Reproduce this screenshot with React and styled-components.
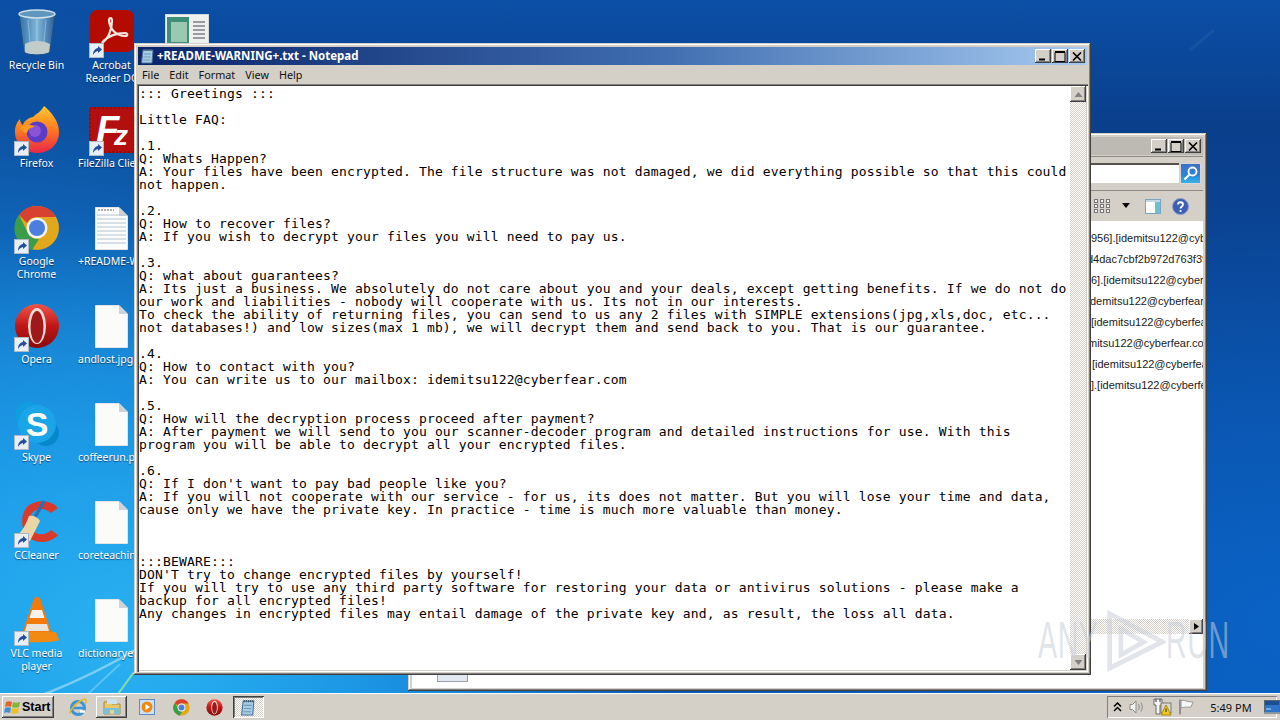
import React from "react";
import styled, { createGlobalStyle, css } from "styled-components";

const Global = createGlobalStyle`
  html, body { margin: 0; padding: 0; width: 1280px; height: 720px; overflow: hidden; background: #0a4ea6; }
  #root { width: 1280px; height: 720px; }
  * { box-sizing: border-box; }
`;

const raised = css`
  background: #d4d0c8;
  box-shadow: inset -1px -1px #404040, inset 1px 1px #fff, inset -2px -2px #808080, inset 2px 2px #d4d0c8;
`;
const dither = css`
  background: repeating-conic-gradient(#d4d0c8 0 25%, #fff 0 50%) 0 0 / 2px 2px;
`;
const uiFont = `"Noto Sans", "Liberation Sans", sans-serif`;

const Screen = styled.div`
  width: 1280px; height: 720px; display: flex; flex-direction: column; overflow: hidden;
  font-family: ${uiFont};
`;
const Desktop = styled.div`
  position: relative; flex: 1; overflow: hidden;
  background:
    radial-gradient(520px 420px at 130px 640px, #2ab2f2 0%, rgba(30,160,235,.75) 50%, rgba(20,130,215,0) 100%),
    radial-gradient(700px 560px at 0px 560px, #1a94e0 0%, rgba(18,120,205,.6) 60%, rgba(15,90,180,0) 100%),
    radial-gradient(500px 400px at 1280px 620px, #0a62c4 0%, rgba(8,80,170,0) 100%),
    linear-gradient(180deg, #0b4fa6 0%, #0a3f8c 18%, #0a4a9e 55%, #0a58b6 100%);
`;
const Streaks = styled.svg`
  position: absolute; inset: 0; width: 1280px; height: 694px;
`;

const IconGrid = styled.div`
  position: relative; display: grid; grid-auto-flow: column;
  grid-template-rows: repeat(7, 98px); grid-template-columns: repeat(3, 75px);
  margin-left: -1px; width: 225px;
`;
const Cell = styled.div`
  display: flex; flex-direction: column; align-items: center; padding-top: 8px; min-width: 0;
`;
const IconBox = styled.div`
  position: relative; width: 48px; height: 48px; display: flex; align-items: center; justify-content: center;
`;
const Badge = styled.svg`
  position: absolute; left: 1px; bottom: -2px; width: 15px; height: 15px;
`;
const Label = styled.div`
  margin-top: 3px; width: 75px; font-size: 10.5px; line-height: 13px; color: #fff;
  text-align: ${p => (p.$start ? "left" : "center")};
  padding-left: ${p => (p.$start ? "4px" : "0")};
  white-space: pre;
  text-shadow: 0 1px 1px rgba(0,0,40,.55);
`;

const Win = styled.div`
  position: absolute; display: flex; flex-direction: column;
  left: ${p => p.$x}px; top: ${p => p.$y}px; width: ${p => p.$w}px; height: ${p => p.$h}px;
  padding: 4px 4px 3px;
  background: #d4d0c8;
  box-shadow: inset -1px -1px #404040, inset 1px 1px #d4d0c8, inset -2px -2px #808080, inset 2px 2px #fff;
`;
const TitleBar = styled.div`
  height: 18px; flex: none; display: flex; align-items: center; padding: 0 2px 0 2px; gap: 0;
  background: ${p => (p.$active ? "linear-gradient(90deg, #0a246a 0%, #3f6db0 55%, #a6caf0 100%)" : "#bdbab3")};
`;
const TitleText = styled.div`
  flex: 1; color: #fff; font-size: 11.5px; font-weight: 700; white-space: nowrap; line-height: 18px; padding-left: 1px;
`;
const CapButton = styled.div`
  ${raised};
  width: 16px; height: 14px; display: flex; align-items: center; justify-content: center; flex: none;
`;
const CapGroup = styled.div`display: flex; gap: 1px; margin-left: auto;`;

const MenuBar = styled.div`
  height: 19px; flex: none; display: flex; align-items: center; gap: 10px; padding: 0 0 0 4px;
  font-size: 10.8px; color: #111;
`;
const EditFrame = styled.div`
  flex: 1; min-height: 0; display: flex; background: #fff; padding: 2px;
  margin: 0 -1px 0 -1px;
  box-shadow: inset 1px 1px #808080, inset 2px 2px #404040, inset -1px -1px #fff, inset -2px -2px #d4d0c8;
`;
const TextArea = styled.pre`
  flex: 1; margin: 0; padding: 1px 0 0 0; overflow: hidden; color: #000;
  font-family: "DejaVu Sans Mono", "Liberation Mono", monospace;
  font-size: 13px; line-height: 13px; letter-spacing: 0.17px; white-space: pre;
`;
const VScroll = styled.div`
  ${dither};
  width: 16px; flex: none; display: flex; flex-direction: column; justify-content: space-between;
`;
const ScrollBtn = styled.div`
  ${raised};
  width: ${p => p.$w || 16}px; height: ${p => p.$h || 16}px; flex: none;
  display: flex; align-items: center; justify-content: center;
`;

const AddressRow = styled.div`
  height: 35px; flex: none; display: flex; align-items: center; justify-content: flex-end;
  gap: 1px; padding-right: 2px;
  border-top: 1px solid #8a8a86; border-bottom: 1px solid #8a8a86; margin-top: 1px;
`;
const SearchBox = styled.div`
  width: 560px; height: 21px; background: #fff; border-top: 2px solid #55534e; border-bottom: 1px solid #d4d0c8;
`;
const SearchBtn = styled.div`
  width: 21px; height: 21px; background: linear-gradient(180deg, #3f6fc6 0%, #2a87d8 60%, #39b2e8 100%);
  border: 1px solid #d8d8d8; display: flex; align-items: center; justify-content: center;
`;
const ToolBar = styled.div`
  height: 30px; flex: none; display: flex; align-items: center; justify-content: flex-end;
  padding-right: 14px;
`;
const ToolSlot = styled.div`
  display: flex; align-items: center; flex: none; margin-right: ${p => p.$gap}px;
`;
const ListPane = styled.div`
  flex: 1; min-height: 0; background: #fff; overflow: hidden; display: flex; flex-direction: column; position: relative;
`;
const FileList = styled.div`flex: none; padding-top: 7px;`;
const FileRow = styled.div`
  height: 21px; line-height: 21px; font-family: "Liberation Sans", sans-serif; font-size: 11px;
  color: #1a1a1a; white-space: nowrap; overflow: hidden;
  padding-left: ${p => p.$x}px;
`;
const HScroll = styled.div`
  ${dither};
  position: absolute; left: 0; right: 0; top: 398px; height: 15px; display: flex; justify-content: flex-end;
`;
const Thumb = styled.div`
  position: absolute; left: 25px; top: 452px; width: 31px; height: 9px;
  background: #e2e8f0; border: 1px solid #9aa0a8; border-top: 0;
`;

const Watermark = styled.div`
  position: absolute; left: 1038px; top: 608px; width: 200px; height: 64px; display: flex; align-items: center;
  pointer-events: none; color: rgba(200,205,215,.55);
`;
const WmText = styled.span`
  font-family: "Liberation Sans", sans-serif; font-size: 52px; line-height: 64px; display: inline-block;
  transform-origin: left center; transform: scaleX(.55); width: ${p => p.$w}px;
  letter-spacing: 1px; white-space: nowrap;
`;

const Taskbar = styled.div`
  height: 27px; flex: none; display: flex; align-items: center; padding: 1px 3px 0 2px;
  background: #d4d0c8; box-shadow: inset 0 1px #fff; position: relative; z-index: 2;
`;
const StartBtn = styled.div`
  ${raised};
  width: 52px; height: 22px; display: flex; align-items: center; gap: 0; padding-left: 2px;
  font-family: "Liberation Sans", sans-serif; font-weight: 700; font-size: 12.5px; color: #000; margin-right: 14px;
`;
const Quick = styled.div`
  display: flex; align-items: center; justify-content: center; height: 22px; flex: none;
  width: ${p => p.$w}px; margin-right: ${p => p.$gap}px;
  ${p => p.$raised && raised}
  ${p => p.$pressed && css`
    ${dither};
    box-shadow: inset 1px 1px #404040, inset -1px -1px #fff, inset 2px 2px #808080;
  `}
`;
const Tray = styled.div`
  margin-left: auto; width: 170px; height: 22px; display: flex; align-items: center; padding-left: 3px;
  box-shadow: inset 1px 1px #808080, inset -1px -1px #fff;
`;
const TraySlot = styled.div`
  width: ${p => p.$w}px; flex: none; display: flex; align-items: center; justify-content: center;
`;
const Clock = styled.div`
  font-size: 11px; color: #111; flex: none; width: 58px; text-align: center; margin-left: 4px; margin-right: 2px;
`;

/* ---------- drawings ---------- */
const Shortcut = () => (
  <Badge viewBox="0 0 15 15">
    <rect x=".5" y=".5" width="14" height="14" fill="#e8eef6" stroke="#aeb8c6" />
    <path d="M4 12c0-4 2-6.5 5-7V3l4 3.6-4 3.4V8C7 8.3 5.500 9.500 4 12z" fill="#1f4f9e" />
  </Badge>
);

const Bin = () => (
  <svg width="40" height="48" viewBox="0 0 40 48">
    <defs><linearGradient id="b1" x1="0" x2="1"><stop offset="0" stopColor="#2f6fa8" /><stop offset=".5" stopColor="#7fb6d8" /><stop offset="1" stopColor="#2a5f98" /></linearGradient></defs>
    <path d="M2 6l5 38c2 3 24 3 26 0l5-38z" fill="url(#b1)" stroke="#234f7a" />
    <path d="M8 36c6-4 18-4 25 0l-1 8c-3 3-22 3-24 0z" fill="#c2ccca" />
    <ellipse cx="20" cy="6" rx="18" ry="4" fill="#5f97bf" stroke="#cfdee8" strokeWidth="1.500" />
    <path d="M11 12l2 22M20 12v22M29 12l-2 22" stroke="#d6ecf8" strokeOpacity=".4" />
  </svg>
);
const Acrobat = () => (
  <svg width="44" height="44" viewBox="0 0 44 44">
    <rect x="0" y="0" width="44" height="42" rx="7" fill="#b30b00" />
    <path d="M12 33c6-4 10-13 10-22 0-4-3-4-3 0 1 8 7 15 16 15 3 0 3-3 0-3-8 0-18 3-23 10z" fill="none" stroke="#f6e6e2" strokeWidth="2.200" />
  </svg>
);
const Thumbnail = () => (
  <svg width="44" height="36" viewBox="0 0 44 36">
    <rect width="44" height="36" fill="#eef0ee" stroke="#b8c4cc" />
    <rect x="2" y="3" width="22" height="28" fill="#3f8f78" />
    <rect x="6" y="8" width="16" height="20" fill="#9cc7b0" />
    <path d="M28 8h12M28 12h12M28 16h12M28 20h12M28 24h12" stroke="#9a9aa4" strokeWidth="2" />
  </svg>
);
const Firefox = () => (
  <svg width="46" height="48" viewBox="0 0 46 48">
    <defs>
      <linearGradient id="f1" x1="0" y1="0" x2="0" y2="1"><stop offset="0" stopColor="#ffcb2e" /><stop offset=".5" stopColor="#ff7a1f" /><stop offset="1" stopColor="#e8264a" /></linearGradient>
    </defs>
    <path d="M30 0c6 5 15 14 15 26 0 13-10 21-22 21S1 38 1 26c0-6 2-10 5-13 0 3 1 5 3 6 1-4 5-7 10-8 3-3 8-5 11-11z" fill="url(#f1)" />
    <circle cx="23" cy="26" r="10.500" fill="#5b3cc4" />
    <circle cx="21" cy="25" r="6" fill="#8a53d8" />
    <path d="M6 22c5-4 11-4 15-1-4 0-7 2-8 6-3 0-5-2-7-5z" fill="#ff9a1f" />
  </svg>
);
const FileZilla = () => (
  <svg width="46" height="46" viewBox="0 0 46 46">
    <rect width="46" height="46" fill="#b30f0f" />
    <rect x="1" y="1" width="44" height="44" fill="none" stroke="#7a0a0a" strokeDasharray="2 2" />
    <text x="7" y="36" fontFamily="Liberation Sans, sans-serif" fontWeight="700" fontStyle="italic" fontSize="38" fill="#fff">F</text>
    <text x="25" y="38" fontFamily="Liberation Sans, sans-serif" fontWeight="700" fontStyle="italic" fontSize="28" fill="#fff">z</text>
  </svg>
);
const Chrome = ({ s = 46 }) => (
  <svg width={s} height={s} viewBox="0 0 46 46">
    <circle cx="23" cy="23" r="22" fill="#e0a81a" />
    <path d="M23 1a22 22 0 0 1 19 11H23a11 11 0 0 0-10 6L5 10A22 22 0 0 1 23 1z" fill="#d8402f" />
    <path d="M5 10l9 18a11 11 0 0 0 11 6l-7 11A22 22 0 0 1 5 10z" fill="#3c9d48" />
    <circle cx="23" cy="23" r="10.500" fill="#f2f4f8" />
    <circle cx="23" cy="23" r="8" fill="#4c7ede" />
  </svg>
);
const Opera = ({ s = 46 }) => (
  <svg width={s} height={s} viewBox="0 0 46 46">
    <defs><linearGradient id={`o${s}`} x1="0" y1="0" x2="0" y2="1"><stop offset="0" stopColor="#f0554a" /><stop offset=".5" stopColor="#c01616" /><stop offset="1" stopColor="#8c0a0a" /></linearGradient></defs>
    <ellipse cx="23" cy="23" rx="22" ry="22" fill={`url(#o${s})`} />
    <ellipse cx="23" cy="23" rx="9" ry="18" fill="#e8dcd8" />
    <ellipse cx="23" cy="24" rx="6.500" ry="16" fill="#a01818" />
  </svg>
);
const Skype = () => (
  <svg width="46" height="46" viewBox="0 0 46 46">
    <circle cx="14" cy="14" r="13" fill="#0f9ee0" />
    <circle cx="32" cy="32" r="13" fill="#0788cc" />
    <circle cx="23" cy="23" r="19" fill="#1aa5e8" />
    <text x="23" y="35" textAnchor="middle" fontFamily="Liberation Sans, sans-serif" fontWeight="700" fontSize="34" fill="#fff">S</text>
  </svg>
);
const CCleaner = () => (
  <svg width="46" height="46" viewBox="0 0 46 46">
    <path d="M44 9C38 1 24 0 15 6 6 13 6 30 14 38c8 7 22 7 30-2l-7-5c-6 6-14 5-18 1-5-5-5-14 0-19 5-4 12-4 18 1z" fill="#d93a2a" />
    <path d="M30 2L20 20" stroke="#2a6fb8" strokeWidth="3.500" />
    <path d="M15 17c4-1 9 1 11 5l-10 20c-5 1-11-2-13-6 5-3 9-11 12-19z" fill="#ecd6a8" />
  </svg>
);
const Vlc = () => (
  <svg width="46" height="48" viewBox="0 0 46 48">
    <path d="M23 1c2 0 3 1 3.500 3L38 38H8L19.500 4C20 2 21 1 23 1z" fill="#f47a0a" />
    <path d="M18 14h10l2.500 8h-15z" fill="#f4f2ee" />
    <path d="M13 28h20l2 7H11z" fill="#e8e4dc" />
    <path d="M4 36h38l3 8c-4 3-40 3-44 0z" fill="#f08a12" />
  </svg>
);
const Doc = ({ lines }) => (
  <svg width="33" height="43" viewBox="0 0 33 43">
    <path d="M.5.5H24L32.500 9V42.500H.5z" fill="#fbfbfa" stroke="#e4e4e4" />
    <path d="M24 .5V9h8.500z" fill="#cfd3d8" />
    {lines && [8, 12, 16, 20, 24, 28, 32, 36].map(y => <path key={y} d={`M2 ${y}H31`} stroke="#b6c2d6" />)}
    {lines && <path d="M3 3h16" stroke="#b0b0b0" strokeDasharray="2 1" strokeWidth="2" />}
  </svg>
);
const Pad = ({ s = 16 }) => (
  <svg width={s} height={s} viewBox="0 0 16 16">
    <path d="M3 2h10l-1 13H1.500z" fill="#a8cbe6" stroke="#47708f" />
    <path d="M4 1v2M6 1v2M8 1v2M10 1v2M12 1v2" stroke="#3d5a70" />
    <path d="M4 6h7M3.500 9h7M3.200 12h7" stroke="#6f99b8" />
  </svg>
);
const IE = () => (
  <svg width="20" height="20" viewBox="0 0 20 20">
    <circle cx="10" cy="11" r="6.500" fill="none" stroke="#3a94d8" strokeWidth="3" />
    <path d="M3.500 11H16.500" stroke="#3a94d8" strokeWidth="2.500" />
    <path d="M12 14.500h5" stroke="#fff" strokeWidth="2.500" />
    <path d="M2 17C1 14 9 4 17 2c2 1 1 4 0 5" fill="none" stroke="#e8b820" strokeWidth="1.500" />
  </svg>
);
const Folder = () => (
  <svg width="20" height="18" viewBox="0 0 20 18">
    <path d="M2 4h6l2 2h8v10H2z" fill="#e8c868" stroke="#a88a3a" />
    <path d="M5 1h10v5H5z" fill="#cfe2ea" />
    <path d="M2 10h16v6H2z" fill="#7cc0d8" />
    <path d="M8 16v-4h4v4" fill="#e9d28a" />
  </svg>
);
const Wmp = () => (
  <svg width="16" height="16" viewBox="0 0 16 16">
    <rect x=".5" y=".5" width="15" height="15" fill="#cfe0f4" stroke="#5f8cc8" />
    <circle cx="8" cy="8" r="5.500" fill="#ee8a14" />
    <path d="M6.500 5v6l4.500-3z" fill="#fff" />
  </svg>
);
const StartFlag = () => (
  <svg width="18" height="16" viewBox="0 0 18 16">
    <path d="M2 3c2-1 4-1 6 0l-1 5c-2-1-4-1-6 0z" fill="#e8612c" />
    <path d="M9 3c2 1 4 1 7 0l-1 5c-3 1-5 1-7 0z" fill="#7cb83a" />
    <path d="M1 9c2-1 4-1 6 0l-1 5c-2-1-4-1-6 0z" fill="#3f8fd8" />
    <path d="M8 9c2 1 4 1 7 0l-1 5c-3 1-5 1-7 0z" fill="#f0c020" />
  </svg>
);
const Min = () => <svg width="10" height="10" viewBox="0 0 10 10"><path d="M1 8.500h6" stroke="#000" strokeWidth="2" /></svg>;
const Max = () => <svg width="12" height="11" viewBox="0 0 12 11"><path d="M1 1.500h10v9H1zM1 .5h10" fill="none" stroke="#000" /></svg>;
const Close = () => <svg width="10" height="9" viewBox="0 0 10 9"><path d="M1 .5l8 8M9 .5l-8 8" stroke="#000" strokeWidth="1.600" /></svg>;
const Caps = () => (
  <CapGroup>
    <CapButton><Min /></CapButton>
    <CapButton><Max /></CapButton>
    <CapButton><Close /></CapButton>
  </CapGroup>
);
const Tri = ({ d, c = "#808080" }) => <svg width="9" height="7" viewBox="0 0 9 7"><path d={d} fill={c} /></svg>;

const ViewGrid = () => (
  <svg width="16" height="14" viewBox="0 0 16 14" fill="#f4f4f0" stroke="#77767a">
    {[0.5, 5.5, 10.5].map(y => [0.5, 6.5, 12.5].map(x => <rect key={`${x}${y}`} x={x} y={y} width="3" height="3" />))}
  </svg>
);
const Pane = () => (
  <svg width="16" height="15" viewBox="0 0 16 15">
    <rect x=".5" y=".5" width="15" height="14" fill="#fff" stroke="#7aa4c4" />
    <rect x="1" y="1" width="14" height="2" fill="#c4d8e8" />
    <rect x="10" y="3" width="5" height="11" fill="#6cc0d0" />
  </svg>
);
const Help = () => (
  <svg width="17" height="17" viewBox="0 0 17 17">
    <circle cx="8.500" cy="8.500" r="8" fill="#3c5fb4" stroke="#8a9ccc" />
    <path d="M6 6.500c0-3 5-3 5 0 0 2-2.500 2-2.500 4" fill="none" stroke="#fff" strokeWidth="1.800" />
    <circle cx="8.500" cy="13" r="1.100" fill="#fff" />
  </svg>
);
const Loupe = () => (
  <svg width="15" height="15" viewBox="0 0 15 15">
    <circle cx="9.500" cy="5.500" r="4" fill="none" stroke="#fff" strokeWidth="1.800" />
    <path d="M6.500 8.500L1.500 13.500" stroke="#fff" strokeWidth="2.200" />
  </svg>
);
const Speaker = () => (
  <svg width="18" height="16" viewBox="0 0 18 16" fill="none" stroke="#8a8a8a">
    <path d="M2 5.500h2.500L8 2v12l-3.500-3.500H2z" fill="#f2f2f0" />
    <path d="M10.500 5c1 2 1 4 0 6M13 3.500c1.700 3 1.700 6 0 9" />
  </svg>
);
const Network = () => (
  <svg width="20" height="18" viewBox="0 0 20 18">
    <path d="M2 1v6h2v9h4V7h2V1z" fill="#f4f4f0" stroke="#6a6a6a" />
    <path d="M4 1v3M8 1v3" stroke="#333" />
    <rect x="9" y="5" width="10" height="10" fill="#d8d8cc" stroke="#7a7a70" />
    <path d="M14 7l5 10H9z" fill="#f2c81e" stroke="#a88a10" />
    <path d="M14 10.500v3.500" stroke="#222" />
  </svg>
);
const FlagTray = () => (
  <svg width="18" height="18" viewBox="0 0 18 18" fill="none">
    <path d="M3 1.500v15" stroke="#7a7a7a" strokeWidth="1.500" />
    <path d="M4 2.500c3-1 5 1 7 1l5 .5-2 5c-3 .5-7-.5-10 1z" fill="#f6f6f4" stroke="#9a9a98" />
  </svg>
);
const Monitor = () => (
  <svg width="16" height="14" viewBox="0 0 16 14">
    <rect x=".5" y=".5" width="15" height="12" fill="#2f74c8" stroke="#5a6670" />
    <path d="M1 1h14v4H1z" fill="#1c4f96" />
    <path d="M2 9h5" stroke="#bfe0f8" />
    <rect x="0" y="12" width="16" height="2" fill="#8896a0" />
  </svg>
);
const Chevrons = () => (
  <svg width="9" height="10" viewBox="0 0 9 10" fill="none" stroke="#000" strokeWidth="1.500">
    <path d="M1 4.500l3.500-3.500 3.500 3.500M1 9l3.500-3.500L8 9" />
  </svg>
);

/* ---------- data ---------- */
const icons = [
  { name: "Recycle Bin", art: <Bin /> },
  { name: "Firefox", art: <Firefox />, link: 1 },
  { name: "Google\nChrome", art: <Chrome />, link: 1 },
  { name: "Opera", art: <Opera />, link: 1 },
  { name: "Skype", art: <Skype />, link: 1 },
  { name: "CCleaner", art: <CCleaner />, link: 1 },
  { name: "VLC media\nplayer", art: <Vlc />, link: 1 },
  { name: "Acrobat\nReader DC", art: <Acrobat />, link: 1 },
  { name: "FileZilla Client", art: <FileZilla />, link: 1, start: 1 },
  { name: "+README-WARNING+.txt", art: <Doc lines />, start: 1 },
  { name: "andlost.jpg", art: <Doc />, start: 1 },
  { name: "coffeerun.png", art: <Doc />, start: 1 },
  { name: "coreteaching.rtf", art: <Doc />, start: 1 },
  { name: "dictionaryen.rtf", art: <Doc />, start: 1 },
  { name: "", art: <Thumbnail /> },
];

const note = `::: Greetings :::

Little FAQ:

.1.
Q: Whats Happen?
A: Your files have been encrypted. The file structure was not damaged, we did everything possible so that this could
not happen.

.2.
Q: How to recover files?
A: If you wish to decrypt your files you will need to pay us.

.3.
Q: what about guarantees?
A: Its just a business. We absolutely do not care about you and your deals, except getting benefits. If we do not do
our work and liabilities - nobody will cooperate with us. Its not in our interests.
To check the ability of returning files, you can send to us any 2 files with SIMPLE extensions(jpg,xls,doc, etc...
not databases!) and low sizes(max 1 mb), we will decrypt them and send back to you. That is our guarantee.

.4.
Q: How to contact with you?
A: You can write us to our mailbox: idemitsu122@cyberfear.com

.5.
Q: How will the decryption process proceed after payment?
A: After payment we will send to you our scanner-decoder program and detailed instructions for use. With this
program you will be able to decrypt all your encrypted files.

.6.
Q: If I don't want to pay bad people like you?
A: If you will not cooperate with our service - for us, its does not matter. But you will lose your time and data,
cause only we have the private key. In practice - time is much more valuable than money.



:::BEWARE:::
DON'T try to change encrypted files by yourself!
If you will try to use any third party software for restoring your data or antivirus solutions - please make a
backup for all encrypted files!
Any changes in encrypted files may entail damage of the private key and, as result, the loss all data.`;

const files = [
  { x: 679, t: "956].[idemitsu122@cyberfear.com]" },
  { x: 675, t: "d4dac7cbf2b972d763f39e5c1" },
  { x: 679, t: "6].[idemitsu122@cyberfear.com]" },
  { x: 678, t: "demitsu122@cyberfear.com]" },
  { x: 679, t: "[idemitsu122@cyberfear.com]" },
  { x: 676, t: "mitsu122@cyberfear.com]" },
  { x: 680, t: "[idemitsu122@cyberfear.com]" },
  { x: 679, t: "].[idemitsu122@cyberfear.com]" },
];

export default function App() {
  return (
    <Screen>
      <Global />
      <Desktop>
        <Streaks viewBox="0 0 1280 694">
          <path d="M45 694C90 676 115 662 135 650" stroke="#fff" strokeOpacity=".4" strokeWidth="2.500" fill="none" />
          <path d="M88 694l32-30" stroke="#d8f4ff" strokeOpacity=".3" strokeWidth="2" fill="none" />
          <path d="M118 694l16-22" stroke="#9ce8a0" strokeOpacity=".8" strokeWidth="2" fill="none" />
          <path d="M1190 50l24-20" stroke="#fff" strokeOpacity=".05" strokeWidth="3" fill="none" />
        </Streaks>
        <IconGrid>
          {icons.map((it, i) => (
            <Cell key={i}>
              <IconBox>
                {it.art}
                {it.link ? <Shortcut /> : null}
              </IconBox>
              <Label $start={it.start}>{it.name}</Label>
            </Cell>
          ))}
        </IconGrid>

        <Win $x={408} $y={133} $w={799} $h={558}>
          <TitleBar><Caps /></TitleBar>
          <AddressRow>
            <SearchBox />
            <SearchBtn><Loupe /></SearchBtn>
          </AddressRow>
          <ToolBar>
            <ToolSlot $gap={1}><ViewGrid /></ToolSlot>
            <ToolSlot $gap={4}>
              <svg width="30" height="6" viewBox="0 0 30 6"><path d="M11 0h8l-4 5z" fill="#000" /></svg>
            </ToolSlot>
            <ToolSlot $gap={11}><Pane /></ToolSlot>
            <ToolSlot $gap={0}><Help /></ToolSlot>
          </ToolBar>
          <ListPane>
            <FileList>
              {files.map((f, i) => <FileRow key={i} $x={f.x}>{f.t}</FileRow>)}
            </FileList>
            <HScroll>
              <ScrollBtn $w={14} $h={15}><Tri d="M2 0l5 3.500L2 7z" c="#000" /></ScrollBtn>
            </HScroll>
            <Thumb />
          </ListPane>
        </Win>

        <Win $x={134} $y={43} $w={957} $h={632}>
          <TitleBar $active>
            <Pad />
            <TitleText>+README-WARNING+.txt - Notepad</TitleText>
            <Caps />
          </TitleBar>
          <MenuBar>
            <span>File</span><span>Edit</span><span>Format</span><span>View</span><span>Help</span>
          </MenuBar>
          <EditFrame>
            <TextArea>{note}</TextArea>
            <VScroll>
              <ScrollBtn><Tri d="M4.500 1l4 5h-8z" /></ScrollBtn>
              <ScrollBtn><Tri d="M.5 1h8l-4 5z" /></ScrollBtn>
            </VScroll>
          </EditFrame>
        </Win>

        <Watermark>
          <WmText $w={66}>ANY</WmText>
          <svg width="62" height="64" viewBox="0 0 66 64" fill="none" stroke="currentColor" strokeWidth="5">
            <path d="M6 4L62 34 6 62zM18 20l24 14-24 14z" />
          </svg>
          <WmText $w={66}>RUN</WmText>
        </Watermark>
      </Desktop>

      <Taskbar>
        <StartBtn><StartFlag />Start</StartBtn>
        <Quick $w={20} $gap={8}><IE /></Quick>
        <Quick $w={31} $gap={10} $raised><Folder /></Quick>
        <Quick $w={20} $gap={14}><Wmp /></Quick>
        <Quick $w={20} $gap={13}><Chrome s={17} /></Quick>
        <Quick $w={20} $gap={9}><Opera s={17} /></Quick>
        <Quick $w={31} $gap={0} $pressed><Pad s={17} /></Quick>
        <Tray>
          <TraySlot $w={14}><Chevrons /></TraySlot>
          <TraySlot $w={26}><Speaker /></TraySlot>
          <TraySlot $w={24}><Network /></TraySlot>
          <TraySlot $w={24}><FlagTray /></TraySlot>
          <Clock>5:49 PM</Clock>
          <TraySlot $w={19}><Monitor /></TraySlot>
        </Tray>
      </Taskbar>
    </Screen>
  );
}
